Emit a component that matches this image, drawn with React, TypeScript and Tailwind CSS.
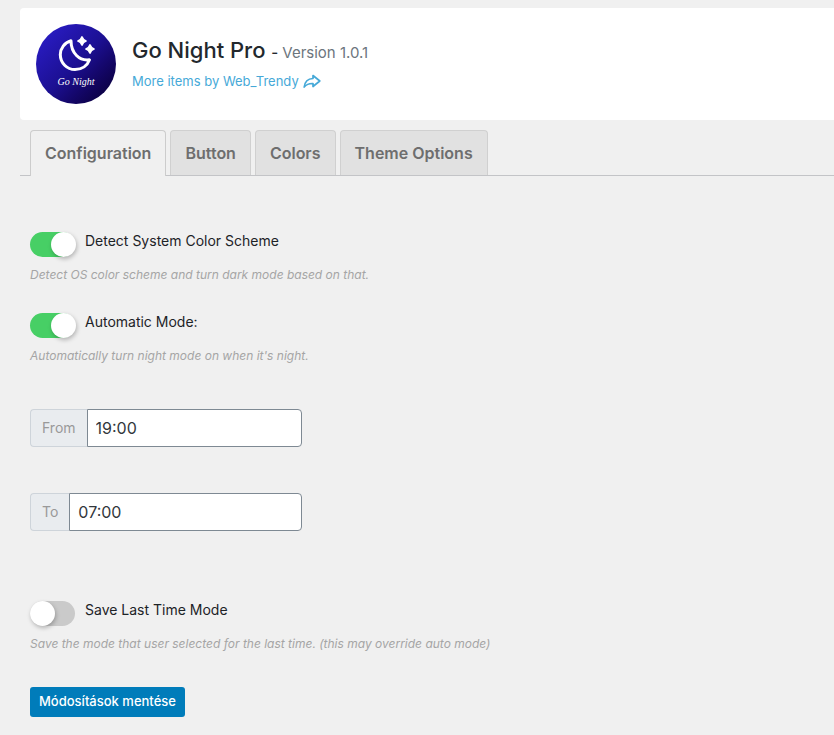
import React, { useState } from 'react';

const tabs = ['Configuration', 'Button', 'Colors', 'Theme Options'];

interface ToggleRowProps {
  id: string;
  label: string;
  hint: string;
  defaultOn?: boolean;
}

function ToggleRow({ id, label, hint, defaultOn = false }: ToggleRowProps) {
  const [on, setOn] = useState(defaultOn);

  return (
    <div>
      <div className="flex items-start gap-[10px]">
        <input
          id={id}
          type="checkbox"
          role="switch"
          checked={on}
          onChange={(e) => setOn(e.target.checked)}
          aria-describedby={`${id}-hint`}
          className="h-[25px] w-[45px] shrink-0 cursor-pointer appearance-none rounded-full bg-[#cacaca] transition-colors before:block before:size-[25px] before:rounded-full before:bg-white before:shadow-[1px_2px_4px_rgba(0,0,0,0.25)] before:transition-transform checked:bg-[#47cf65] checked:before:translate-x-[21px]"
        />
        <label htmlFor={id} className="text-sm leading-[18px] text-[#1d2327]">
          {label}
        </label>
      </div>
      <p id={`${id}-hint`} className="mt-2 text-xs leading-5 text-[#a5a5a5] italic">
        {hint}
      </p>
    </div>
  );
}

interface TimeFieldProps {
  id: string;
  label: string;
  defaultValue: string;
}

function TimeField({ id, label, defaultValue }: TimeFieldProps) {
  return (
    <div className="flex h-[38px] w-full max-w-[272px]">
      <label
        htmlFor={id}
        className="flex items-center rounded-l border border-r-0 border-[#ced4da] bg-[#e9ecef] px-[11px] text-sm text-[#999]"
      >
        {label}
      </label>
      <input
        id={id}
        type="text"
        defaultValue={defaultValue}
        className="min-w-0 flex-1 rounded-r border border-[#7e8993] bg-white px-2 text-base text-[#32373c] focus:outline-none"
      />
    </div>
  );
}

function Logo() {
  return (
    <div className="flex size-20 shrink-0 flex-col items-center rounded-full bg-linear-to-br from-[#2d1fd0] via-[#1c1093] to-[#07002e] pt-2 text-white">
      <svg className="size-11" viewBox="0 0 44 44" fill="none" aria-hidden="true">
        <path
          d="M17 8.800C10.500 10.500 6.300 16.500 6.300 22.500C6.300 31 13 37.500 21 37.500C28 37.500 33.500 33.500 35.500 27.800C30.500 28.500 26 27 22.500 23.500C18.500 19.500 17 14.500 17 8.800Z"
          stroke="currentColor"
          strokeWidth="3"
          strokeLinejoin="round"
        />
        <path
          d="M28 5Q29 8 32 9Q29 10 28 13Q27 10 24 9Q27 8 28 5ZM36 13Q37 16 40 17Q37 18 36 21Q35 18 32 17Q35 16 36 13Z"
          fill="currentColor"
          stroke="currentColor"
          strokeWidth="1.800"
          strokeLinejoin="round"
        />
      </svg>
      <span className="font-['Liberation_Serif',serif] text-[10px] leading-3 italic">Go Night</span>
    </div>
  );
}

export default function App() {
  const [activeTab, setActiveTab] = useState('Configuration');

  return (
    <div className="min-h-screen bg-[#f0f0f0] pt-2 pb-4 pl-5 font-['Inter',sans-serif]">
      <header className="flex items-center gap-4 rounded-l bg-white p-4">
        <Logo />
        <div className="pb-1">
          <h1 className="text-[22px] leading-8 font-medium text-[#23282d]">
            Go Night Pro <span className="text-[15px]">- <span className="font-normal text-[#6c757d]">Version 1.0.1</span></span>
          </h1>
          <a href="#items" className="mt-0.5 flex items-center gap-1 text-[13px] leading-5 text-[#46a9d8]">
            More items by Web_Trendy
            <svg className="h-4 w-[18px]" viewBox="0 0 18 16" fill="none" aria-hidden="true">
              <path
                d="M10 2.500L16.800 8L10 13.500V10.500C6 10.300 3.500 11.300 1.200 14C1.800 9 5 5.700 10 5.500Z"
                stroke="currentColor"
                strokeWidth="1.700"
                strokeLinejoin="round"
              />
            </svg>
          </a>
        </div>
      </header>

      <nav className="mt-[10px] flex gap-1 border-b border-[#c3c4c7] px-[10px]">
        {tabs.map((tab) => (
          <button
            key={tab}
            type="button"
            onClick={() => setActiveTab(tab)}
            className={
              activeTab === tab
                ? '-mb-px rounded-t border border-b-0 border-[#ccc] bg-[#f0f0f0] px-[14px] pt-[10px] pb-[11px] text-base font-semibold text-[#6e6e6e]'
                : 'rounded-t border border-b-0 border-[#d0d0d0] bg-[#e1e1e1] px-[14px] py-[10px] text-base font-semibold text-[#6e6e6e]'
            }
          >
            {tab}
          </button>
        ))}
      </nav>

      <form className="px-[10px] pt-14" onSubmit={(e) => e.preventDefault()}>
        <div className="space-y-7">
          <ToggleRow
            id="detect-os"
            label="Detect System Color Scheme"
            hint="Detect OS color scheme and turn dark mode based on that."
            defaultOn
          />
          <ToggleRow
            id="auto-mode"
            label="Automatic Mode:"
            hint="Automatically turn night mode on when it's night."
            defaultOn
          />
        </div>

        <div className="mt-[43px] mb-[70px] space-y-[46px]">
          <TimeField id="time-from" label="From" defaultValue="19:00" />
          <TimeField id="time-to" label="To" defaultValue="07:00" />
        </div>

        <ToggleRow
          id="save-last"
          label="Save Last Time Mode"
          hint="Save the mode that user selected for the last time. (this may override auto mode)"
        />

        <button
          type="submit"
          className="mt-[33px] h-[30px] rounded-[3px] bg-[#007cba] px-[9px] text-[13px] font-medium text-white hover:bg-[#006ba1]"
        >
          Módosítások mentése
        </button>
      </form>
    </div>
  );
}
